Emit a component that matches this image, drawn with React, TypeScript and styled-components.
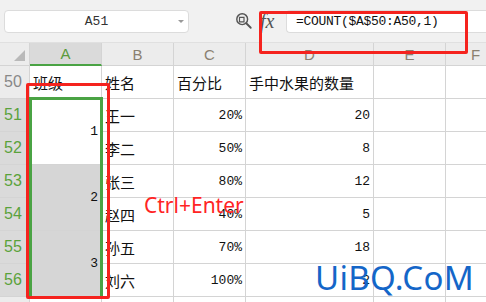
import styled, { createGlobalStyle } from "styled-components"

const Global = createGlobalStyle`
    body{
        margin:0;
        background:#fff;
        overflow:hidden;
    }
`
const Page = styled.div`
    position:relative;
    width:486px;
    height:302px;
    overflow:hidden;
    font-family:"Liberation Sans", "Noto Sans CJK SC", sans-serif;
`
const Toolbar = styled.div`
    display:flex;
    align-items:center;
    height:43px;
    background:#f1f1f1;
    border-bottom:1px solid #e0e0e0;
    box-sizing:border-box;
    padding:0 0 0 4px;
`
const NameBox = styled.div`
    position:relative;
    width:185px;
    height:23px;
    background:#fff;
    border:1px solid #dcdcdc;
    border-radius:4px;
    box-sizing:border-box;
    display:flex;
    align-items:center;
    justify-content:center;
    font-family:"Liberation Mono", monospace;
    font-size:13px;
    color:#333;
    >.arrow{
        position:absolute;
        right:4px;
        top:9px;
        width:0;
        height:0;
        border-left:3px solid transparent;
        border-right:3px solid transparent;
        border-top:3px solid #999;
    }
`
const Search = styled.div`
    display:flex;
    align-items:center;
    justify-content:center;
    margin-left:46px;
`
const Fx = styled.div`
    margin-left:7px;
    width:21px;
    font-family:"Liberation Serif", serif;
    font-style:italic;
    font-size:20px;
    color:#555;
    line-height:20px;
`
const FormulaInput = styled.div`
    flex:1;
    height:23px;
    margin-left:5px;
    background:#fff;
    border:1px solid #dcdcdc;
    border-right:none;
    border-radius:4px 0 0 4px;
    box-sizing:border-box;
    display:flex;
    align-items:center;
    padding-left:9px;
    font-family:"Liberation Mono", monospace;
    font-size:13px;
    color:#111;
    letter-spacing:-0.3px;
`
const Grid = styled.div`
    display:grid;
    grid-template-columns:30px 72px 72px 72px 128px 72px 60px;
    grid-template-rows:23px repeat(8, 33px);
`
const Corner = styled.div`
    position:relative;
    background:#ececec;
    border-right:1px solid #d4d4d4;
    border-bottom:1px solid #d4d4d4;
    >.tri{
        position:absolute;
        right:4px;
        bottom:4px;
        width:0;
        height:0;
        border-left:11px solid transparent;
        border-bottom:11px solid #b9b9b9;
    }
`
const ColHead = styled.div<{ active?: boolean }>`
    display:flex;
    align-items:center;
    justify-content:center;
    background:${props => props.active ? '#dadada' : '#ececec'};
    border-right:1px solid #d4d4d4;
    border-bottom:${props => props.active ? '2px solid #4aa344' : '1px solid #d4d4d4'};
    font-size:15px;
    color:${props => props.active ? '#5a9a3c' : '#8a8070'};
`
const RowHead = styled.div<{ active?: boolean }>`
    display:flex;
    align-items:center;
    padding-left:4px;
    background:${props => props.active ? '#dadada' : '#ececec'};
    border-right:1px solid #d4d4d4;
    border-bottom:1px solid #d4d4d4;
    font-size:16px;
    color:${props => props.active ? '#5aa23c' : '#888'};
`
const Cell = styled.div<{ align?: string, span?: number, shade?: boolean, mono?: boolean }>`
    display:flex;
    align-items:center;
    justify-content:${props => props.align === 'right' ? 'flex-end' : 'flex-start'};
    padding:0 3px;
    grid-row:${props => props.span ? `span ${props.span}` : 'auto'};
    background:${props => props.shade ? '#d6d6d6' : '#fff'};
    border-right:1px solid #d4d4d4;
    border-bottom:1px solid #d4d4d4;
    font-family:${props => props.mono ? '"Liberation Mono", monospace' : '"Noto Sans CJK SC", sans-serif'};
    font-size:${props => props.mono ? '13px' : '15px'};
    color:#111;
    white-space:nowrap;
    overflow:hidden;
`
const Selection = styled.div`
    position:absolute;
    left:29px;
    top:97px;
    width:68px;
    height:196px;
    border:3px solid #4aa344;
`
const RedBox = styled.div<{ x: number, y: number, w: number, h: number }>`
    position:absolute;
    left:${props => props.x}px;
    top:${props => props.y}px;
    width:${props => props.w}px;
    height:${props => props.h}px;
    border:3.5px solid #f5231e;
    border-radius:2px;
    box-sizing:border-box;
`
const Note = styled.div`
    position:absolute;
    left:144px;
    top:191px;
    font-family:"Noto Sans", sans-serif;
    font-size:21px;
    color:#ff2424;
`
const Watermark = styled.div`
    position:absolute;
    left:315px;
    top:255px;
    font-family:"Noto Sans", sans-serif;
    font-size:33px;
    color:#1466c8;
    letter-spacing:0.3px;
`

const data = [
    { n: 51, name: '王一', pct: '20%', qty: '20' },
    { n: 52, name: '李二', pct: '50%', qty: '8' },
    { n: 53, name: '张三', pct: '80%', qty: '12' },
    { n: 54, name: '赵四', pct: '40%', qty: '5' },
    { n: 55, name: '孙五', pct: '70%', qty: '18' },
    { n: 56, name: '刘六', pct: '100%', qty: '2' },
]
const merged: Record<number, { v: string, shade: boolean }> = {
    51: { v: '1', shade: false },
    53: { v: '2', shade: true },
    55: { v: '3', shade: true },
}
const cols = ['A', 'B', 'C', 'D', 'E', 'F']

const App = () => {
    return (
        <Page>
            <Global />
            <Toolbar>
                <NameBox>A51<span className="arrow"></span></NameBox>
                <Search>
                    <svg width="18" height="18" viewBox="0 0 20 20">
                        <circle cx="8" cy="8" r="6" fill="none" stroke="#555" strokeWidth="1.6" />
                        <path d="M5 6h5v5h-5z" fill="none" stroke="#555" strokeWidth="1.3" />
                        <path d="M12.5 12.5l5 5" stroke="#555" strokeWidth="2" strokeLinecap="round" />
                    </svg>
                </Search>
                <Fx>fx</Fx>
                <FormulaInput>=COUNT($A$50:A50,1)</FormulaInput>
            </Toolbar>
            <Grid>
                <Corner><span className="tri"></span></Corner>
                {cols.map(c =>
                    <ColHead key={c} active={c === 'A'}>{c}</ColHead>
                )}
                <RowHead>50</RowHead>
                <Cell>班级</Cell>
                <Cell>姓名</Cell>
                <Cell>百分比</Cell>
                <Cell>手中水果的数量</Cell>
                <Cell></Cell>
                <Cell></Cell>
                {data.map(r => {
                    const m = merged[r.n]
                    return [
                        <RowHead key={r.n + 'h'} active>{r.n}</RowHead>,
                        m ? <Cell key={r.n + 'a'} span={2} align="right" mono shade={m.shade}>{m.v}</Cell> : null,
                        <Cell key={r.n + 'b'}>{r.name}</Cell>,
                        <Cell key={r.n + 'c'} align="right" mono>{r.pct}</Cell>,
                        <Cell key={r.n + 'd'} align="right" mono>{r.qty}</Cell>,
                        <Cell key={r.n + 'e'}></Cell>,
                        <Cell key={r.n + 'f'}></Cell>,
                    ]
                })}
                <RowHead>57</RowHead>
                {cols.map(c => <Cell key={'57' + c}></Cell>)}
            </Grid>
            <Selection />
            <RedBox x={26} y={83} w={84} h={216} />
            <RedBox x={259} y={11} w={209} h={43} />
            <Note>Ctrl+Enter</Note>
            <Watermark>UiBQ.CoM</Watermark>
        </Page>
    )
}

export default App
